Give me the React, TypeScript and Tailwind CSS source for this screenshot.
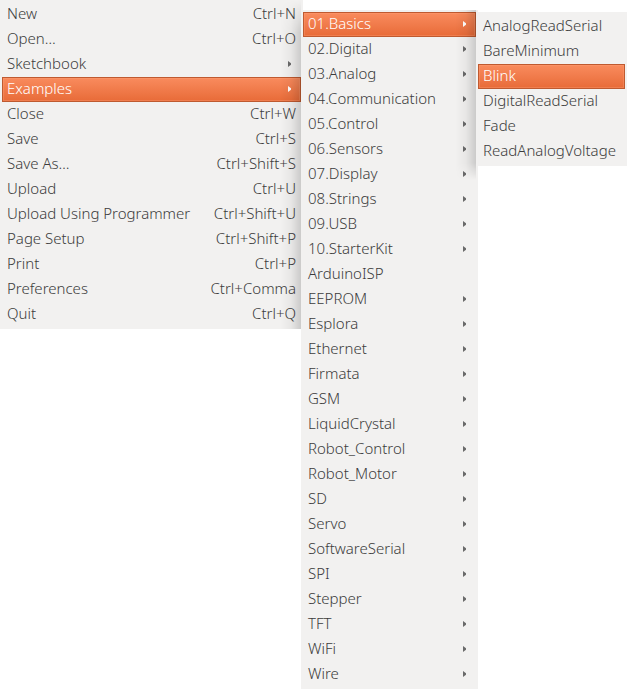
type Item = { label: string; keys?: string; sub?: boolean; active?: boolean };

const fileMenu: Item[] = [
  { label: "New", keys: "Ctrl+N" },
  { label: "Open…", keys: "Ctrl+O" },
  { label: "Sketchbook", sub: true },
  { label: "Examples", sub: true, active: true },
  { label: "Close", keys: "Ctrl+W" },
  { label: "Save", keys: "Ctrl+S" },
  { label: "Save As…", keys: "Ctrl+Shift+S" },
  { label: "Upload", keys: "Ctrl+U" },
  { label: "Upload Using Programmer", keys: "Ctrl+Shift+U" },
  { label: "Page Setup", keys: "Ctrl+Shift+P" },
  { label: "Print", keys: "Ctrl+P" },
  { label: "Preferences", keys: "Ctrl+Comma" },
  { label: "Quit", keys: "Ctrl+Q" },
];

const examplesMenu: Item[] = [
  { label: "01.Basics", sub: true, active: true },
  { label: "02.Digital", sub: true },
  { label: "03.Analog", sub: true },
  { label: "04.Communication", sub: true },
  { label: "05.Control", sub: true },
  { label: "06.Sensors", sub: true },
  { label: "07.Display", sub: true },
  { label: "08.Strings", sub: true },
  { label: "09.USB", sub: true },
  { label: "10.StarterKit", sub: true },
  { label: "ArduinoISP" },
  { label: "EEPROM", sub: true },
  { label: "Esplora", sub: true },
  { label: "Ethernet", sub: true },
  { label: "Firmata", sub: true },
  { label: "GSM", sub: true },
  { label: "LiquidCrystal", sub: true },
  { label: "Robot_Control", sub: true },
  { label: "Robot_Motor", sub: true },
  { label: "SD", sub: true },
  { label: "Servo", sub: true },
  { label: "SoftwareSerial", sub: true },
  { label: "SPI", sub: true },
  { label: "Stepper", sub: true },
  { label: "TFT", sub: true },
  { label: "WiFi", sub: true },
  { label: "Wire", sub: true },
];

const basicsMenu: Item[] = [
  { label: "AnalogReadSerial" },
  { label: "BareMinimum" },
  { label: "Blink", active: true },
  { label: "DigitalReadSerial" },
  { label: "Fade" },
  { label: "ReadAnalogVoltage" },
];

function Row({ label, keys, sub, active }: Item) {
  return (
    <button
      type="button"
      role="menuitem"
      aria-haspopup={sub ? "menu" : undefined}
      aria-expanded={sub ? !!active : undefined}
      className={
        "flex h-[25px] w-full items-center justify-between border px-1 pb-[2px] text-left whitespace-nowrap " +
        (active
          ? "border-[#bf5a30] bg-linear-to-b from-[#f98b5d] to-[#e86b38] text-white shadow-[inset_0_0_0_1px_rgba(255,160,120,0.35)]"
          : "border-transparent text-[#3c3c3c]")
      }
    >
      <span className="pb-[2px]">{label}</span>
      {keys && <span className="pb-[2px]">{keys}</span>}
      {sub && (
        <svg
          viewBox="0 0 3 6"
          aria-hidden="true"
          className={"mr-[5px] h-[6px] w-[3px] " + (active ? "text-white" : "text-[#6a6a6a]")}
        >
          <path d="M0 0L3 2.2V3.8L0 6Z" fill="currentColor" />
        </svg>
      )}
    </button>
  );
}

function Menu({ name, items, className = "", shade }: { name: string; items: Item[]; className?: string; shade?: string }) {
  return (
    <div role="menu" aria-label={name} className={"relative bg-[#f2f1f0] p-[2px] " + className}>
      {items.map((item) => (
        <Row key={item.label} {...item} />
      ))}
      {shade && (
        <div
          aria-hidden="true"
          className={"pointer-events-none absolute right-[2px] w-5 bg-linear-to-r from-black/0 via-black/4 to-black/16 " + shade}
        />
      )}
    </div>
  );
}

export default function App() {
  return (
    <main className="grid grid-cols-[301fr_175fr_151fr] items-start bg-white font-['Noto_Sans','Open_Sans',sans-serif] text-[15px] leading-5 font-light">
      <Menu name="File" items={fileMenu} className="-mr-[2px]" shade="top-0 bottom-0 mask-t-from-90%" />
      <Menu name="Examples" items={examplesMenu} className="mt-[10px] -mr-[2px]" shade="top-0 h-[170px] mask-b-from-90%" />
      <Menu name="Basics" items={basicsMenu} className="mt-3" />
    </main>
  );
}
